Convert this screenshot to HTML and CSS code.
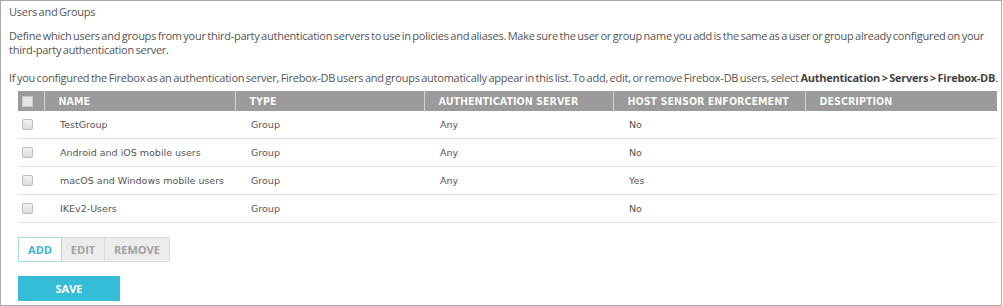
FILE: index.html
```html
<!DOCTYPE html>
<html lang="en">
<head>
    <meta charset="UTF-8">
    <title>Users and Groups</title>
    <link rel="stylesheet" href="styles.css">
</head>
<body>
    <div class="panel">
        <div class="panel-title">Users and Groups</div>
        <p class="intro">Define which users and groups from your third-party authentication servers to use in policies and aliases. Make sure the user or group name you add is the same as a user or group already configured on your third-party authentication server.</p>
        <p class="intro second">If you configured the Firebox as an authentication server, Firebox-DB users and groups automatically appear in this list. To add, edit, or remove Firebox-DB users, select <b>Authentication &gt; Servers &gt; Firebox-DB</b>.</p>

        <table class="grid">
            <thead>
                <tr>
                    <th class="col-check"><span class="check head"></span></th>
                    <th class="col-name">NAME</th>
                    <th class="col-type">TYPE</th>
                    <th class="col-auth">AUTHENTICATION SERVER</th>
                    <th class="col-host">HOST SENSOR ENFORCEMENT</th>
                    <th>DESCRIPTION</th>
                </tr>
            </thead>
            <tbody>
                <tr>
                    <td class="col-check"><span class="check"></span></td>
                    <td>TestGroup</td>
                    <td>Group</td>
                    <td>Any</td>
                    <td>No</td>
                    <td></td>
                </tr>
                <tr>
                    <td class="col-check"><span class="check"></span></td>
                    <td>Android and iOS mobile users</td>
                    <td>Group</td>
                    <td>Any</td>
                    <td>No</td>
                    <td></td>
                </tr>
                <tr>
                    <td class="col-check"><span class="check"></span></td>
                    <td>macOS and Windows mobile users</td>
                    <td>Group</td>
                    <td>Any</td>
                    <td>Yes</td>
                    <td></td>
                </tr>
                <tr>
                    <td class="col-check"><span class="check"></span></td>
                    <td>IKEv2-Users</td>
                    <td>Group</td>
                    <td></td>
                    <td>No</td>
                    <td></td>
                </tr>
            </tbody>
        </table>

        <div class="btn-group">
            <button class="btn btn-add">ADD</button>
            <button class="btn btn-off">EDIT</button>
            <button class="btn btn-off">REMOVE</button>
        </div>

        <button class="btn-save">SAVE</button>
    </div>
</body>
</html>
```

FILE: styles.css
```css
html, body {
    margin: 0;
    padding: 0;
    background: white;
}

.panel {
    box-sizing: border-box;
    width: 1002px;
    height: 306px;
    border: 1px solid #a9a9a9;
    padding: 3px 2px 0 8px;
    font-family: "Open Sans", sans-serif;
    font-size: 11px;
    letter-spacing: -0.25px;
    word-spacing: -1px;
    color: #555;
    overflow: hidden;
}

.panel-title {
    line-height: 16px;
}

.intro {
    margin: 9px 0 0 0;
    line-height: 14px;
}

.intro.second {
    margin-top: 14px;
}

.intro b {
    color: #444;
}

.grid {
    margin: 6px 0 0 9px;
    width: 979px;
    border-collapse: collapse;
    table-layout: fixed;
    letter-spacing: 0;
    word-spacing: 0;
}

.grid th,
.grid td {
    font-family: "DejaVu Sans", Verdana, sans-serif;
    text-align: left;
}

.grid th {
    box-sizing: border-box;
    background: #9b9b9b;
    color: white;
    font-weight: bold;
    font-size: 9.6px;
    height: 20px;
    padding: 0 0 0 14px;
    border-left: 1px solid #d4d4d4;
    text-shadow: 0 0 1px rgba(0,0,0,0.25);
}

.grid th:first-child {
    border-left: none;
}

.grid td {
    height: 27px;
    font-size: 9.5px;
    padding: 0 0 0 16px;
    border-bottom: 1px solid #e2e2e2;
    color: #555;
}

.grid .col-check {
    width: 26px;
    padding: 0 0 0 4px;
}

.col-name { width: 191px; }
.col-type { width: 189px; }
.col-auth { width: 189px; }
.col-host { width: 192px; }

.check {
    display: block;
    width: 9px;
    height: 9px;
    border: 1px solid #bdbdbd;
    border-radius: 2px;
    background: linear-gradient(#f2f2f2, #dcdcdc);
}

.check.head {
    border-color: #c8c8c8;
    background: #e6e6e6;
    border-radius: 0;
}

.btn-group {
    display: flex;
    margin: 14px 0 0 9px;
}

.btn {
    font-family: "Open Sans", sans-serif;
    font-weight: bold;
    font-size: 11px;
    letter-spacing: 0;
    height: 25px;
    padding: 0;
    border: 1px solid #dcdcdc;
    background: #ececec;
    color: #a0a0a0;
    margin: 0;
}

.btn-add {
    width: 44px;
    background: white;
    border-color: #a8dde8;
    color: #3ab3d4;
}

.btn-off {
    border-left: none;
}

.btn-off:nth-child(2) {
    width: 43px;
}

.btn-off:nth-child(3) {
    width: 65px;
}

.btn-save {
    display: block;
    margin: 14px 0 0 9px;
    width: 102px;
    height: 25px;
    border: none;
    background: #35bcd6;
    color: white;
    font-family: "Open Sans", sans-serif;
    font-weight: bold;
    font-size: 11px;
    letter-spacing: 0;
}
```
